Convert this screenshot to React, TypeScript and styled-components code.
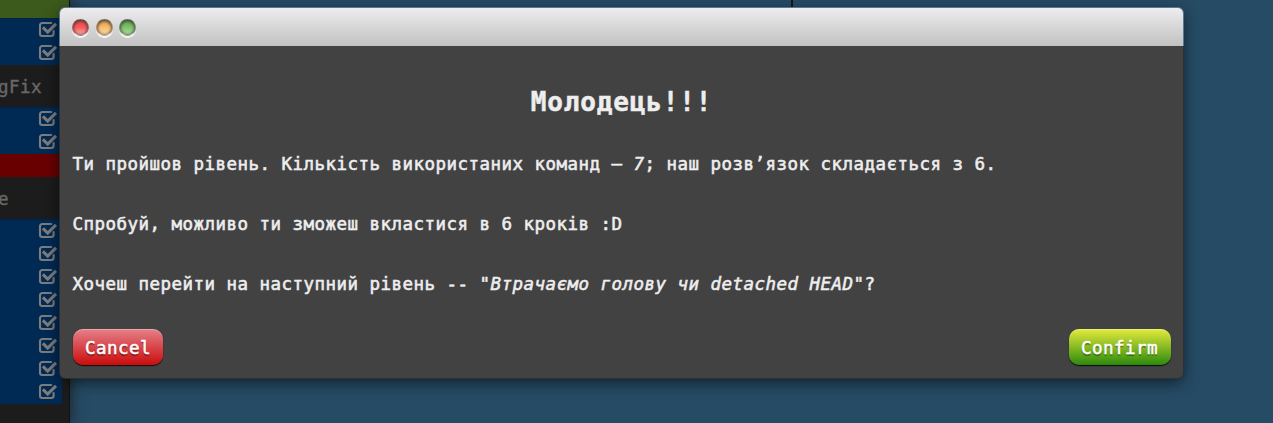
import React from "react";
import styled, { createGlobalStyle } from "styled-components";

const GlobalStyle = createGlobalStyle`
  * { box-sizing: border-box; }
  body { margin: 0; overflow: hidden; background: #264b65; }
`;

const Page = styled.div`
  position: relative;
  display: flex;
  width: 1273px;
  height: 423px;
  overflow: hidden;
  background: #264b65;
  font-family: "DejaVu Sans Mono", monospace;
  font-size: 17.5px;
  letter-spacing: 0.465px;
`;

const Sidebar = styled.aside`
  display: flex;
  flex-direction: column;
  flex: none;
  width: 70px;
  height: 423px;
  background: #1c1c1c;
  border-right: 1px solid #101315;
  box-shadow: 2px 0 12px rgba(28, 34, 38, 0.85);
`;

const Band = styled.div<{ $color: string; $height: number }>`
  flex: none;
  height: ${(p) => p.$height}px;
  background: ${(p) => p.$color};
`;

const Levels = styled.div`
  flex: none;
  width: 62px;
  background: #002a54;
  border-top: 1px solid #00234a;
`;

const Level = styled.div`
  display: flex;
  justify-content: flex-end;
  height: 23px;
  padding: 1px 5px 0 0;
`;

const GroupName = styled.div<{ $height: number }>`
  flex: none;
  height: ${(p) => p.$height}px;
  margin-left: -2px;
  line-height: ${(p) => p.$height + 2}px;
  color: #686868;
  -webkit-text-stroke: 0.4px #686868;
`;

const Canvas = styled.main`
  display: flex;
  flex: 1;
  justify-content: center;
`;

const Trunk = styled.div`
  width: 2px;
  height: 40px;
  margin-left: 241px;
  background: #141414;
`;

const Dialog = styled.section`
  position: absolute;
  left: 60px;
  top: 8px;
  display: flex;
  flex-direction: column;
  width: 1123px;
  height: 370px;
  border-radius: 5px;
  background: #424242;
  box-shadow: 0 0 0 1px rgba(50, 50, 50, 0.8), 0 4px 15px rgba(0, 0, 0, 0.6);
  color: #eee;
`;

const TitleBar = styled.header`
  display: flex;
  flex: none;
  gap: 6.5px;
  height: 38px;
  padding: 11px 12px 0;
  border-radius: 5px 5px 0 0;
  background: linear-gradient(#eeecee, #c2c2c2);
  box-shadow: 0 0 0 1px #557b98;
  clip-path: inset(-1px -1px 0 -1px);
`;

const Light = styled.span<{ $top: string; $mid: string; $low: string }>`
  width: 17px;
  height: 17px;
  border-radius: 50%;
  border: 1px solid rgba(90, 90, 90, 0.45);
  border-top-color: rgba(70, 70, 70, 0.7);
  border-bottom-color: rgba(170, 170, 170, 0.4);
  background: linear-gradient(${(p) => p.$top}, ${(p) => p.$mid} 50%, ${(p) => p.$low});
  box-shadow: inset 0 1px 3px rgba(60, 50, 50, 0.65), inset 0 0 3px rgba(60, 50, 50, 0.8),
    0 2px 0 rgba(255, 255, 255, 0.85);
`;

const Content = styled.div`
  display: flex;
  flex: 1;
  flex-direction: column;
  padding: 0 12px 13px;
`;

const Heading = styled.h2`
  margin: 36px 0 0;
  height: 37px;
  line-height: 41px;
  text-align: center;
  font-size: 26px;
  letter-spacing: 0.85px;
  -webkit-text-stroke: 0.5px #eee;
`;

const Copy = styled.p`
  margin: 0;
  padding: 30px 0 0 0.5px;
  line-height: 30px;
  white-space: pre;
  -webkit-text-stroke: 0.55px #eee;
`;

const Actions = styled.div`
  display: flex;
  justify-content: space-between;
  margin-top: auto;
  padding-left: 1px;
`;

const Button = styled.button<{ $from: string; $to: string; $width: number }>`
  width: ${(p) => p.$width}px;
  height: 36px;
  padding: 1px 0 0 12px;
  text-align: left;
  border: 0;
  border-radius: 10px;
  background: linear-gradient(${(p) => p.$from}, ${(p) => p.$to});
  box-shadow: 0 1px 1px #080808, inset 0 1px 0 rgba(255, 255, 255, 0.3);
  color: #fff;
  font: inherit;
  letter-spacing: inherit;
  text-shadow: 0 2px 1px rgba(0, 0, 0, 0.4);
  -webkit-text-stroke: 0.5px #fff;
`;

const CheckIcon = () => (
  <svg width="19" height="19" viewBox="0 0 19 19" fill="none" stroke="#7c7c7c">
    <path strokeWidth="2.1" strokeLinecap="round" d="M13.2 3H4.2a2.2 2.2 0 0 0-2.2 2.2v8.6a2.2 2.2 0 0 0 2.2 2.2h9.2a2.2 2.2 0 0 0 2.2-2.2V11" />
    <path strokeWidth="3.1" d="M4.9 7.4L9.7 12L18 3.8" />
  </svg>
);

const LevelGroup = ({ count }: { count: number }) => (
  <Levels>
    {Array.from({ length: count }, (_, i) => (
      <Level key={i}>
        <CheckIcon />
      </Level>
    ))}
  </Levels>
);

export default function App() {
  return (
    <Page>
      <GlobalStyle />
      <Sidebar>
        <Band $color="#3c5a1b" $height={18} />
        <LevelGroup count={2} />
        <GroupName $height={42}>gFix</GroupName>
        <LevelGroup count={2} />
        <Band $color="#690000" $height={23} />
        <GroupName $height={42}>e</GroupName>
        <LevelGroup count={8} />
      </Sidebar>
      <Canvas>
        <Trunk />
      </Canvas>
      <Dialog>
        <TitleBar>
          <Light $top="#d84a4a" $mid="#fb5a5a" $low="#f9b3ad" />
          <Light $top="#d09a50" $mid="#f9bd6c" $low="#fbdcb0" />
          <Light $top="#5fa050" $mid="#7fc46c" $low="#b5dca8" />
        </TitleBar>
        <Content>
          <Heading>Молодець!!!</Heading>
          <Copy>
            Ти пройшов рівень. Кількість використаних команд — <em>7</em>; наш розв’язок складається з 6.
          </Copy>
          <Copy>Спробуй, можливо ти зможеш вкластися в 6 кроків :D</Copy>
          <Copy>
            Хочеш перейти на наступний рівень -- <em>"Втрачаємо голову чи detached HEAD"</em>?
          </Copy>
          <Actions>
            <Button $from="#e58089" $to="#cb0c0c" $width={90}>Cancel</Button>
            <Button $from="#e3ea3c" $to="#2c8a0c" $width={102}>Confirm</Button>
          </Actions>
        </Content>
      </Dialog>
    </Page>
  );
}
